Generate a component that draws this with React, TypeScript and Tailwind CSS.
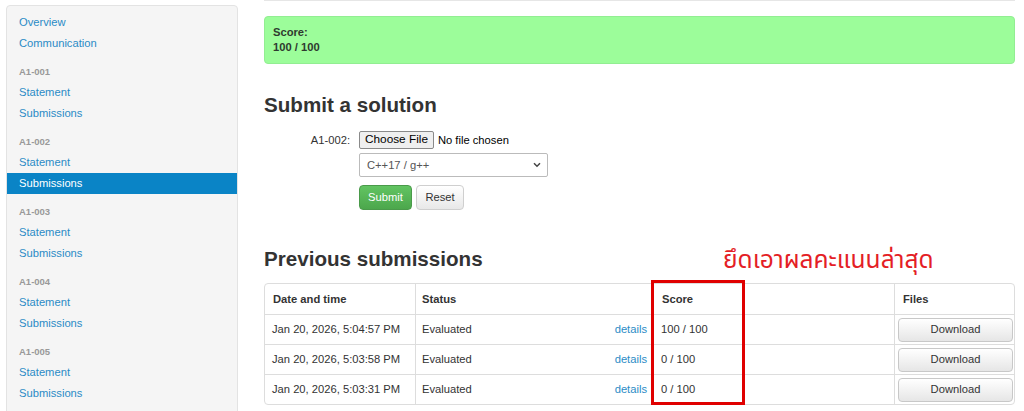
import React from "react";

const link = "text-[#2a8bc6]";

function Sidebar() {
  const groups = ["A1-001", "A1-002", "A1-003", "A1-004", "A1-005"];
  return (
    <div className="mt-[5px] w-[232px] shrink-0 rounded-[4px] border border-[#e3e3e3] bg-[#f5f5f5] pt-[6px] pb-[40px] text-[11.2px]">
      <div className={`h-[21px] px-[12px] leading-[21px] ${link}`}>Overview</div>
      <div className={`h-[21px] px-[12px] leading-[21px] ${link}`}>Communication</div>
      {groups.map((g) => (
        <div key={g} className="mt-[8px]">
          <div className="h-[20px] px-[12px] text-[9.5px] font-bold leading-[20px] text-[#999]">{g}</div>
          <div className={`h-[21px] px-[12px] leading-[21px] ${link}`}>Statement</div>
          {g === "A1-002" ? (
            <div className="h-[21px] bg-[#0a84c6] px-[12px] leading-[21px] text-white">Submissions</div>
          ) : (
            <div className={`h-[21px] px-[12px] leading-[21px] ${link}`}>Submissions</div>
          )}
        </div>
      ))}
    </div>
  );
}

function DownloadBtn() {
  return (
    <div className="flex h-[24px] w-[115px] items-center justify-center rounded-[4px] border border-[#c8c8c8] bg-gradient-to-b from-white to-[#e6e6e6] text-[11.2px] text-[#333] shadow-[inset_0_1px_0_rgba(255,255,255,0.4)]">
      Download
    </div>
  );
}

export default function App() {
  const rows = [
    ["Jan 20, 2026, 5:04:57 PM", "100 / 100"],
    ["Jan 20, 2026, 5:03:58 PM", "0 / 100"],
    ["Jan 20, 2026, 5:03:31 PM", "0 / 100"],
  ];
  return (
    <div
      className="flex min-h-[411px] w-[1024px] bg-white pl-[6px] text-[#333]"
      style={{ fontFamily: '"Liberation Sans", Arial, sans-serif' }}
    >
      <Sidebar />
      <div className="ml-[26px] w-[751px]">
        <div className="h-px bg-[#e6e6e6]" />
        <div className="mt-[15px] rounded-[4px] border border-[#92ee92] bg-[#9cfd9a] px-[8px] py-[8px] text-[11.2px] font-bold leading-[15px] text-[#2f3a2f]">
          <div>Score:</div>
          <div>100 / 100</div>
        </div>

        <h2 className="mt-[24px] text-[20.6px] font-bold leading-[34px] text-[#333]">Submit a solution</h2>

        <div className="mt-[9px] flex">
          <div className="w-[86px] pt-[1px] text-right text-[11.2px] leading-[17px]">A1-002:</div>
          <div className="ml-[9px] flex flex-col">
            <div className="flex h-[18px] items-center">
              <div className="flex h-[18px] items-center rounded-[2px] border border-[#8a8a8a] bg-[#efefef] px-[5px] text-[11.8px] text-black">
                Choose File
              </div>
              <span className="ml-[4px] text-[11.2px] text-black">No file chosen</span>
            </div>
            <div className="mt-[4px] flex h-[24px] w-[189px] items-center justify-between rounded-[2px] border border-[#bbb] bg-white pl-[7px] pr-[6px] text-[11.2px] text-[#555]">
              <span>C++17 / g++</span>
              <svg width="8" height="6" viewBox="0 0 8 6">
                <path d="M1 1.2 L4 4.2 L7 1.2" stroke="#444" strokeWidth="1.5" fill="none" />
              </svg>
            </div>
            <div className="mt-[8px] flex gap-[4px]">
              <div className="flex h-[25px] w-[53px] items-center justify-center rounded-[4px] border border-[#4a9a4a] bg-gradient-to-b from-[#62c462] to-[#4ca74c] text-[11.2px] text-white">
                Submit
              </div>
              <div className="flex h-[25px] w-[48px] items-center justify-center rounded-[4px] border border-[#cfcfcf] bg-gradient-to-b from-white to-[#e8e8e8] text-[11.2px] text-[#333]">
                Reset
              </div>
            </div>
          </div>
        </div>

        <div className="relative mt-[32px]">
          <h2 className="text-[20.6px] font-bold leading-[34px] text-[#333]">Previous submissions</h2>
          <div
            className="absolute left-[459px] top-[4px] text-[24.5px] leading-[30px] text-[#e41e26]"
            style={{ fontFamily: '"Noto Sans Thai", Tahoma, "Noto Sans", "DejaVu Sans", sans-serif' }}
          >
            ยึดเอาผลคะแนนล่าสุด
          </div>

          <div className="relative mt-[7px]">
            <div className="overflow-hidden rounded-[4px] border border-[#ddd] text-[11.2px]">
              <div className="flex h-[30px] items-center font-bold">
                <div className="flex h-full w-[150px] items-center pl-[8px]">Date and time</div>
                <div className="flex h-full w-[238px] items-center border-l border-[#ddd] pl-[6px]">Status</div>
                <div className="flex h-full w-[241px] items-center border-l border-[#ddd] pl-[8px]">Score</div>
                <div className="flex h-full flex-1 items-center border-l border-[#ddd] pl-[8px]">Files</div>
              </div>
              {rows.map(([d, s]) => (
                <div key={d} className="flex h-[30px] items-center border-t border-[#ddd]">
                  <div className="flex h-full w-[150px] items-center pl-[7px]">{d}</div>
                  <div className="flex h-full w-[238px] items-center justify-between border-l border-[#ddd] pl-[6px] pr-[6px]">
                    <span>Evaluated</span>
                    <span className={link}>details</span>
                  </div>
                  <div className="flex h-full w-[241px] items-center border-l border-[#ddd] pl-[7px]">{s}</div>
                  <div className="flex h-full flex-1 items-center border-l border-[#ddd] pl-[3px]">
                    <DownloadBtn />
                  </div>
                </div>
              ))}
            </div>
            <div className="absolute left-[387px] top-[-3px] h-[125px] w-[94px] border-[3px] border-[#e00000]" />
          </div>
        </div>
      </div>
    </div>
  );
}
